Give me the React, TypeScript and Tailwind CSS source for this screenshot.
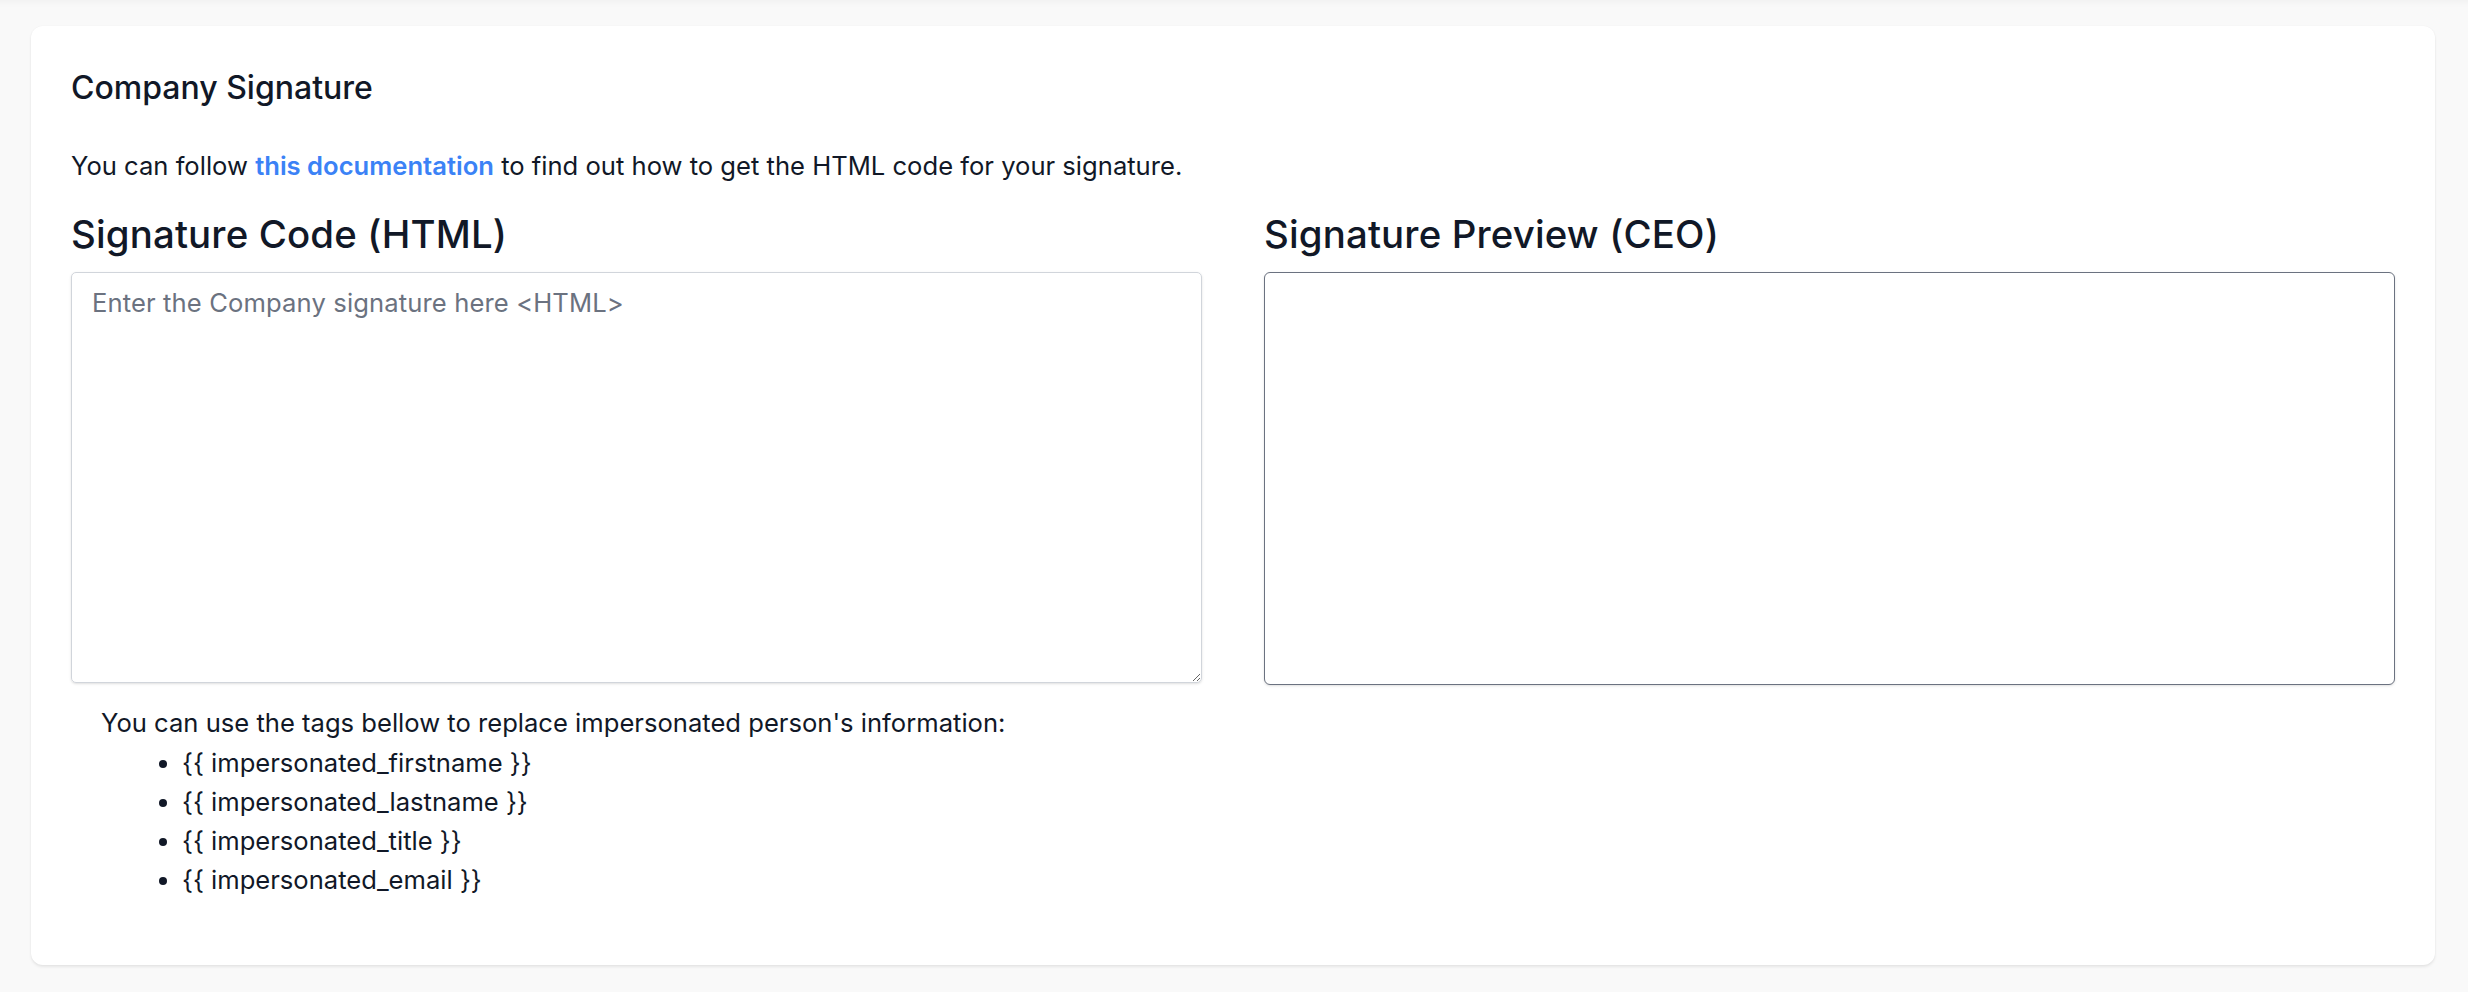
import React from "react";

export default function App() {
  return (
    <div className="min-h-screen bg-[#f9f9f9] pt-[26px] pl-[31px] pr-[33px] pb-[27px] font-['Inter',sans-serif] text-[#111827] shadow-[inset_0_10px_10px_-10px_rgba(0,0,0,0.06)]">
      <div className="rounded-[12px] bg-white px-[40px] pt-[40px] pb-[66px] shadow-[0_2px_3px_rgba(0,0,0,0.08),0_0_2px_rgba(0,0,0,0.04)]">
        <h2 className="text-[32px] leading-[44.8px] font-medium">Company Signature</h2>
        <p className="mt-[36px] text-[25.6px] leading-[38.4px]">
          You can follow{" "}
          <a href="#" className="font-semibold text-[#3b82f6]">
            this documentation
          </a>{" "}
          to find out how to get the HTML code for your signature.
        </p>
        <div className="mt-[24px] grid grid-cols-2 gap-[62px]">
          <div>
            <h3 className="text-[38.4px] leading-[51.2px] font-medium tracking-[0.15px]">Signature Code (HTML)</h3>
            <textarea
              className="mt-[12px] block h-[411px] w-full rounded-[5px] border border-[#d1d5db] px-[20px] py-[11px] text-[25.6px] leading-[38.4px] tracking-[0.12px] text-[#111827] shadow-sm outline-none placeholder:text-[#6b7280]"
              placeholder="Enter the Company signature here <HTML>"
            />
            <div className="mt-[20px] pl-[30px] text-[25.6px] leading-[39.2px]">
              <div>You can use the tags bellow to replace impersonated person's information:</div>
              <ul className="list-disc pl-[81px]">
                <li>{"{{ impersonated_firstname }}"}</li>
                <li>{"{{ impersonated_lastname }}"}</li>
                <li>{"{{ impersonated_title }}"}</li>
                <li>{"{{ impersonated_email }}"}</li>
              </ul>
            </div>
          </div>
          <div>
            <h3 className="text-[38.4px] leading-[51.2px] font-medium tracking-[0.15px]">Signature Preview (CEO)</h3>
            <div className="mt-[12px] h-[413px] w-full rounded-[6px] border border-[#6b7280] bg-white shadow-sm" />
          </div>
        </div>
      </div>
    </div>
  );
}
